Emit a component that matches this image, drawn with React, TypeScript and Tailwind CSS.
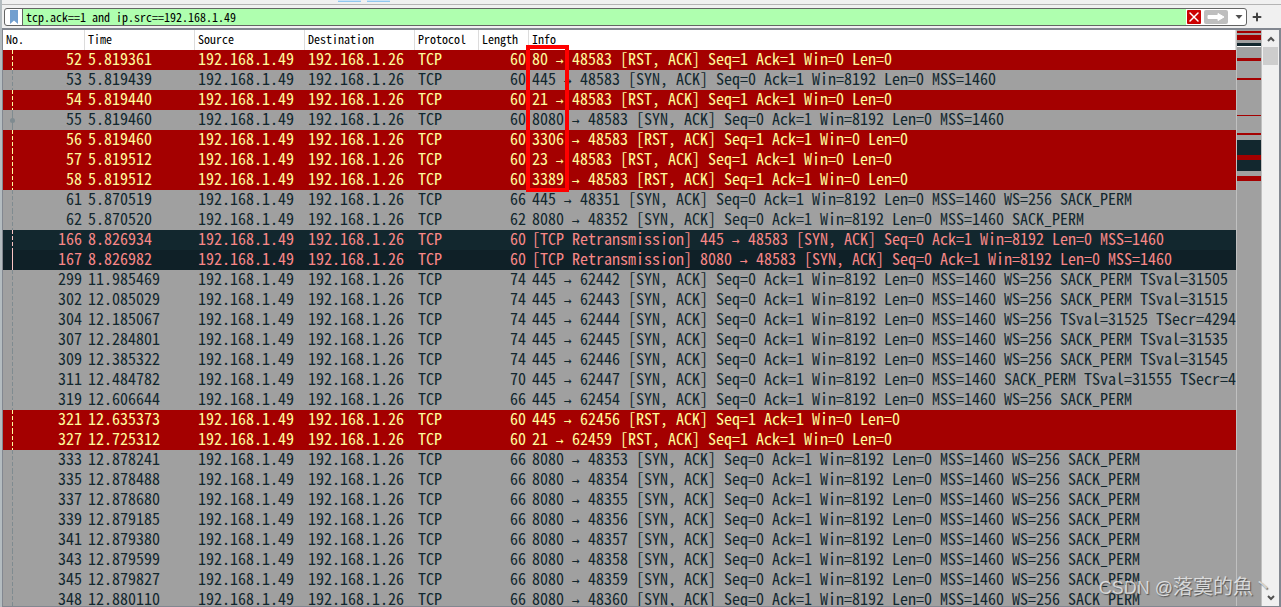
import { Plus } from 'lucide-react';

type RowKind = 'reset' | 'normal' | 'retransmit' | 'retransmitLast';

interface Packet {
  no: number;
  time: string;
  length: number;
  info: string;
  kind: RowKind;
}

const packets: Packet[] = [
  { no: 52, time: '5.819361', length: 60, kind: 'reset', info: '80 → 48583 [RST, ACK] Seq=1 Ack=1 Win=0 Len=0' },
  { no: 53, time: '5.819439', length: 60, kind: 'normal', info: '445 → 48583 [SYN, ACK] Seq=0 Ack=1 Win=8192 Len=0 MSS=1460' },
  { no: 54, time: '5.819440', length: 60, kind: 'reset', info: '21 → 48583 [RST, ACK] Seq=1 Ack=1 Win=0 Len=0' },
  { no: 55, time: '5.819460', length: 60, kind: 'normal', info: '8080 → 48583 [SYN, ACK] Seq=0 Ack=1 Win=8192 Len=0 MSS=1460' },
  { no: 56, time: '5.819460', length: 60, kind: 'reset', info: '3306 → 48583 [RST, ACK] Seq=1 Ack=1 Win=0 Len=0' },
  { no: 57, time: '5.819512', length: 60, kind: 'reset', info: '23 → 48583 [RST, ACK] Seq=1 Ack=1 Win=0 Len=0' },
  { no: 58, time: '5.819512', length: 60, kind: 'reset', info: '3389 → 48583 [RST, ACK] Seq=1 Ack=1 Win=0 Len=0' },
  { no: 61, time: '5.870519', length: 66, kind: 'normal', info: '445 → 48351 [SYN, ACK] Seq=0 Ack=1 Win=8192 Len=0 MSS=1460 WS=256 SACK_PERM' },
  { no: 62, time: '5.870520', length: 62, kind: 'normal', info: '8080 → 48352 [SYN, ACK] Seq=0 Ack=1 Win=8192 Len=0 MSS=1460 SACK_PERM' },
  { no: 166, time: '8.826934', length: 60, kind: 'retransmit', info: '[TCP Retransmission] 445 → 48583 [SYN, ACK] Seq=0 Ack=1 Win=8192 Len=0 MSS=1460' },
  { no: 167, time: '8.826982', length: 60, kind: 'retransmitLast', info: '[TCP Retransmission] 8080 → 48583 [SYN, ACK] Seq=0 Ack=1 Win=8192 Len=0 MSS=1460' },
  { no: 299, time: '11.985469', length: 74, kind: 'normal', info: '445 → 62442 [SYN, ACK] Seq=0 Ack=1 Win=8192 Len=0 MSS=1460 WS=256 SACK_PERM TSval=31505' },
  { no: 302, time: '12.085029', length: 74, kind: 'normal', info: '445 → 62443 [SYN, ACK] Seq=0 Ack=1 Win=8192 Len=0 MSS=1460 WS=256 SACK_PERM TSval=31515' },
  { no: 304, time: '12.185067', length: 74, kind: 'normal', info: '445 → 62444 [SYN, ACK] Seq=0 Ack=1 Win=8192 Len=0 MSS=1460 WS=256 TSval=31525 TSecr=4294' },
  { no: 307, time: '12.284801', length: 74, kind: 'normal', info: '445 → 62445 [SYN, ACK] Seq=0 Ack=1 Win=8192 Len=0 MSS=1460 WS=256 SACK_PERM TSval=31535' },
  { no: 309, time: '12.385322', length: 74, kind: 'normal', info: '445 → 62446 [SYN, ACK] Seq=0 Ack=1 Win=8192 Len=0 MSS=1460 WS=256 SACK_PERM TSval=31545' },
  { no: 311, time: '12.484782', length: 70, kind: 'normal', info: '445 → 62447 [SYN, ACK] Seq=0 Ack=1 Win=8192 Len=0 MSS=1460 SACK_PERM TSval=31555 TSecr=4' },
  { no: 319, time: '12.606644', length: 66, kind: 'normal', info: '445 → 62454 [SYN, ACK] Seq=0 Ack=1 Win=8192 Len=0 MSS=1460 WS=256 SACK_PERM' },
  { no: 321, time: '12.635373', length: 60, kind: 'reset', info: '445 → 62456 [RST, ACK] Seq=1 Ack=1 Win=0 Len=0' },
  { no: 327, time: '12.725312', length: 60, kind: 'reset', info: '21 → 62459 [RST, ACK] Seq=1 Ack=1 Win=0 Len=0' },
  { no: 333, time: '12.878241', length: 66, kind: 'normal', info: '8080 → 48353 [SYN, ACK] Seq=0 Ack=1 Win=8192 Len=0 MSS=1460 WS=256 SACK_PERM' },
  { no: 335, time: '12.878488', length: 66, kind: 'normal', info: '8080 → 48354 [SYN, ACK] Seq=0 Ack=1 Win=8192 Len=0 MSS=1460 WS=256 SACK_PERM' },
  { no: 337, time: '12.878680', length: 66, kind: 'normal', info: '8080 → 48355 [SYN, ACK] Seq=0 Ack=1 Win=8192 Len=0 MSS=1460 WS=256 SACK_PERM' },
  { no: 339, time: '12.879185', length: 66, kind: 'normal', info: '8080 → 48356 [SYN, ACK] Seq=0 Ack=1 Win=8192 Len=0 MSS=1460 WS=256 SACK_PERM' },
  { no: 341, time: '12.879380', length: 66, kind: 'normal', info: '8080 → 48357 [SYN, ACK] Seq=0 Ack=1 Win=8192 Len=0 MSS=1460 WS=256 SACK_PERM' },
  { no: 343, time: '12.879599', length: 66, kind: 'normal', info: '8080 → 48358 [SYN, ACK] Seq=0 Ack=1 Win=8192 Len=0 MSS=1460 WS=256 SACK_PERM' },
  { no: 345, time: '12.879827', length: 66, kind: 'normal', info: '8080 → 48359 [SYN, ACK] Seq=0 Ack=1 Win=8192 Len=0 MSS=1460 WS=256 SACK_PERM' },
  { no: 348, time: '12.880110', length: 66, kind: 'normal', info: '8080 → 48360 [SYN, ACK] Seq=0 Ack=1 Win=8192 Len=0 MSS=1460 WS=256 SACK_PERM' },
];

const rowClass: Record<RowKind, string> = {
  reset: 'bg-[#a40000] text-[#fffc9c]',
  normal: 'bg-[#a0a0a0] text-[#12272e]',
  retransmit: 'bg-[#12272e] text-[#f78787]',
  retransmitLast: 'bg-[#0f2027] text-[#f78787]',
};

const traceClass: Record<RowKind, string> = {
  reset: 'text-[#fffc9c]',
  normal: 'text-[#7f8b90]',
  retransmit: 'text-[#fbc4c4]',
  retransmitLast: 'text-[#fbc4c4]',
};

const columns = [
  { name: 'No.', width: 'w-[82px]' },
  { name: 'Time', width: 'w-[110px]' },
  { name: 'Source', width: 'w-[110px]' },
  { name: 'Destination', width: 'w-[110px]' },
  { name: 'Protocol', width: 'w-16' },
  { name: 'Length', width: 'w-[50px]' },
  { name: 'Info', width: '' },
];

// [top, height, color] of each band in the overview strip
const bands: [number, number, string][] = [
  [1, 2, '#a40000'],
  [5, 5, '#a40000'],
  [13, 3, '#12272e'],
  [16, 1, '#ffffff'],
  [28, 3, '#a40000'],
  [48, 2, '#a40000'],
  [85, 1, '#a40000'],
  [103, 2, '#a40000'],
  [110, 31, '#12272e'],
  [125, 5, '#a40000'],
  [146, 5, '#a40000'],
];

function TraceMark({ packet }: { packet: Packet }) {
  const solid = packet.no === 55 || packet.kind === 'retransmitLast';
  return (
    <svg className={`h-5 w-2 shrink-0 ${traceClass[packet.kind]}`} viewBox="0 0 8 20" aria-hidden="true">
      <line
        x1="3.5"
        y1="0"
        x2="3.5"
        y2="20"
        stroke="currentColor"
        strokeDasharray={solid ? undefined : '4 2'}
        shapeRendering="crispEdges"
      />
      {packet.no === 55 && <circle cx="3.5" cy="10.5" r="2.5" fill="currentColor" />}
    </svg>
  );
}

function InfoText({ info }: { info: string }) {
  const [from, to] = info.split('→');
  return (
    <>
      {from}
      <span className="inline-block w-2 text-center font-['DejaVu_Sans_Mono',monospace] text-[13px] leading-4">→</span>
      {to}
    </>
  );
}

function FilterBar() {
  return (
    <form className="flex h-[23px] shrink-0 items-start pt-[3px] pr-1 pl-0.5" onSubmit={(e) => e.preventDefault()}>
      <div className="flex h-[18px] min-w-0 flex-1 items-center overflow-hidden rounded-[3px] border border-[#646464] bg-white">
        <button
          type="button"
          aria-label="Filter bookmarks"
          className="flex h-4 w-[18px] shrink-0 items-center justify-center border-r border-[#646464]"
        >
          <svg className="h-[14px] w-2" viewBox="0 0 8 14" aria-hidden="true">
            <path d="M0 0h8v14L4 10.5 0 14z" fill="#729fcf" />
          </svg>
        </button>
        <input
          type="text"
          aria-label="Display filter"
          defaultValue="tcp.ack==1 and ip.src==192.168.1.49"
          className="h-4 min-w-0 flex-1 bg-[#afffaf] px-[3px] text-xs text-black outline-none"
        />
        <button type="button" aria-label="Clear filter" className="ml-px shrink-0">
          <svg className="h-[14px] w-[14px]" viewBox="0 0 14 14" aria-hidden="true">
            <rect width="14" height="14" rx="1" fill="#cc0000" />
            <path d="M3 3l8 8M11 3l-8 8" stroke="#fff" strokeWidth="1.5" strokeLinecap="round" />
          </svg>
        </button>
        <button type="button" aria-label="Apply filter" className="ml-[3px] shrink-0">
          <svg className="h-[14px] w-6" viewBox="0 0 24 14" aria-hidden="true">
            <rect width="24" height="14" rx="2" fill="#bebebe" />
            <path d="M4 5.5h10V3.5l6 3.5-6 3.5v-2H4z" fill="#fff" stroke="#fff" strokeLinejoin="round" />
          </svg>
        </button>
        <button
          type="button"
          aria-label="Filter history"
          className="flex h-4 w-[18px] shrink-0 items-center justify-center pl-1"
        >
          <svg className="h-1 w-2" viewBox="0 0 8 4" aria-hidden="true">
            <path d="M0.5 0h7L4 4z" fill="#505050" />
          </svg>
        </button>
      </div>
      <button type="button" aria-label="Add filter button" className="mr-3.5 ml-1 flex h-[18px] shrink-0 items-center">
        <Plus className="h-3 w-3 text-[#404040]" strokeWidth={4} />
      </button>
    </form>
  );
}

function PacketTable() {
  return (
    <div className="relative min-w-0 flex-1 overflow-hidden bg-[#a0a0a0]">
      <table className="w-full table-fixed border-collapse">
        <colgroup>
          {columns.map((column) => (
            <col key={column.name} className={column.width} />
          ))}
        </colgroup>
        <thead>
          <tr className="h-5 bg-white text-xs leading-[18px] text-black">
            {columns.map((column) => (
              <th key={column.name} className="p-0 text-left font-normal">
                <div className="h-5 border-r border-[#dcdcdc] pl-[3px]">{column.name}</div>
              </th>
            ))}
          </tr>
        </thead>
        <tbody className="text-base leading-4 whitespace-pre">
          {packets.map((packet) => (
            <tr key={packet.no} className={`h-5 align-top ${rowClass[packet.kind]}`}>
              <td className="p-0">
                <div className="flex h-5 justify-between pr-[3px] pl-1.5">
                  <TraceMark packet={packet} />
                  {packet.no}
                </div>
              </td>
              <td className="p-0 pl-[3px]">{packet.time}</td>
              <td className="p-0 pl-[3px]">192.168.1.49</td>
              <td className="p-0 pl-[3px]">192.168.1.26</td>
              <td className="p-0 pl-[3px]">TCP</td>
              <td className="p-0 pr-[3px] text-right">{packet.length}</td>
              <td className="p-0 pl-[3px]">
                <InfoText info={packet.info} />
              </td>
            </tr>
          ))}
        </tbody>
      </table>

      {/* Highlight around the probed ports */}
      <div className="absolute top-[15px] left-[523px] h-[147px] w-[43px] border-4 border-[#ff0000]" />
    </div>
  );
}

function OverviewStrip() {
  return (
    <svg className="h-full w-[26px] shrink-0 border-x border-[#c0c0c0] bg-[#a0a0a0]" aria-hidden="true">
      {bands.map(([top, height, color]) => (
        <rect key={`${top}-${height}`} x="0" y={top} width="24" height={height} fill={color} />
      ))}
    </svg>
  );
}

function ScrollBar() {
  return (
    <div className="flex w-[17px] shrink-0 flex-col bg-[#f0f0f0]">
      <button type="button" aria-label="Scroll up" className="flex h-[17px] items-center justify-center">
        <svg className="h-1.5 w-2" viewBox="0 0 8 6" aria-hidden="true">
          <path d="M1 5l3-3 3 3" fill="none" stroke="#505050" strokeWidth="2" />
        </svg>
      </button>
      <div className="mx-px h-[18px] bg-[#cdcdcd]" />
      <button type="button" aria-label="Scroll down" className="mt-auto flex h-[17px] items-center justify-center">
        <svg className="h-1.5 w-2" viewBox="0 0 8 6" aria-hidden="true">
          <path d="M1 1l3 3 3-3" fill="none" stroke="#505050" strokeWidth="2" />
        </svg>
      </button>
    </div>
  );
}

export default function App() {
  return (
    <div className="relative flex h-screen flex-col overflow-hidden border-l-2 border-[#b4bcc0] bg-[#f0f0f0] font-['Noto_Sans_Mono_CJK_SC','Liberation_Mono',monospace]">
      {/* Bottom edge of the toolbar */}
      <div className="flex h-[5px] shrink-0 items-start gap-1.5 border-b border-[#b4b4b4] pl-[336px]">
        <div className="h-0.5 w-[23px] border-b border-[#90c8f0] bg-[#cce4f7]" />
        <div className="h-0.5 w-[23px] border-b border-[#90c8f0] bg-[#cce4f7]" />
      </div>
      <FilterBar />
      <main className="flex min-h-0 flex-1 border-t-2 border-r-2 border-b border-l border-[#828790]">
        <PacketTable />
        <OverviewStrip />
        <ScrollBar />
      </main>
      <div className="absolute right-2 bottom-1 font-['Liberation_Sans','Noto_Sans_CJK_SC',sans-serif] text-xl leading-8 text-white/70 [text-shadow:1px_1px_1px_#555]">
        <span className="text-lg">CSDN @</span>落寞的魚丶
      </div>
    </div>
  );
}
